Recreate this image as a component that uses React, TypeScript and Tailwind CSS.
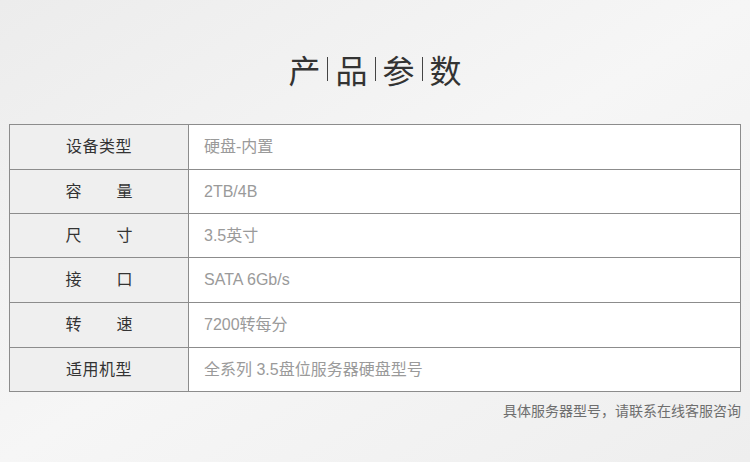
import React from "react";

const rows: { label: string[]; value: string; h: string }[] = [
  { label: ["设备类型"], value: "硬盘-内置", h: "h-[44px]" },
  { label: ["容", "量"], value: "2TB/4B", h: "h-[44px]" },
  { label: ["尺", "寸"], value: "3.5英寸", h: "h-[44px]" },
  { label: ["接", "口"], value: "SATA 6Gb/s", h: "h-[45px]" },
  { label: ["转", "速"], value: "7200转每分", h: "h-[45px]" },
  { label: ["适用机型"], value: "全系列 3.5盘位服务器硬盘型号", h: "h-[44px]" },
];

const font = "font-['Liberation_Sans','Noto_Sans_CJK_SC',sans-serif]";

export default function App() {
  const title = ["产", "品", "参", "数"];
  return (
    <div
      className={`w-[750px] h-[462px] overflow-hidden bg-linear-to-br from-[#ececec] via-[#f6f6f6] to-[#eeeeee] ${font}`}
    >
      <div className="flex justify-center items-center pt-[48px] h-[90px] font-['Noto_Sans_CJK_SC',sans-serif] text-[32px] leading-none text-[#333]">
        {title.map((c, i) => (
          <React.Fragment key={i}>
            {i > 0 && <span className="mx-[7px] w-px h-[24px] bg-[#444]" />}
            <span>{c}</span>
          </React.Fragment>
        ))}
      </div>
      <div className="mt-[34px] mx-[9px] border border-[#8c8c8c] bg-white">
        {rows.map((r, i) => (
          <div
            key={i}
            className={`flex ${r.h} ${i > 0 ? "border-t border-[#8c8c8c]" : ""}`}
          >
            <div className="w-[179px] shrink-0 bg-[#efefef] border-r border-[#8c8c8c] flex items-center justify-center text-[16px] text-[#333]">
              {r.label.length === 1 ? (
                <span className="tracking-[0.5px]">{r.label[0]}</span>
              ) : (
                <span className="w-[67px] flex justify-between">
                  <span>{r.label[0]}</span>
                  <span>{r.label[1]}</span>
                </span>
              )}
            </div>
            <div className="flex-1 flex items-center pl-[15px] text-[16px] text-[#9a9a9a]">
              {r.value}
            </div>
          </div>
        ))}
      </div>
      <div className="mt-[9px] mr-[9px] text-right text-[14px] text-[#6e6e6e]">
        具体服务器型号，请联系在线客服咨询
      </div>
    </div>
  );
}
